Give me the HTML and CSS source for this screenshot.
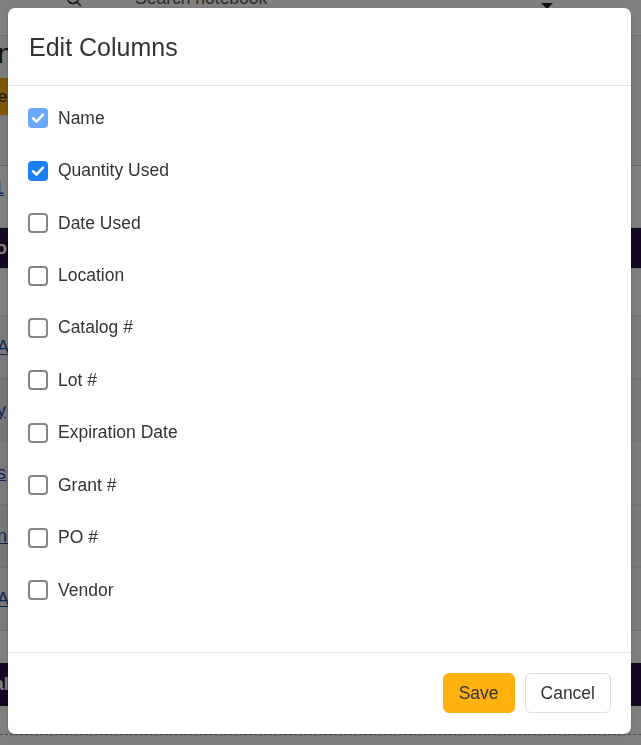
FILE: index.html
```html
<!DOCTYPE html>
<html lang="en">
<head>
<meta charset="utf-8">
<title>Edit Columns</title>
<link rel="stylesheet" href="styles.css">
</head>
<body>
<div class="page">
  <div class="topbar">
    <svg class="search-icon" width="16" height="16" viewBox="0 0 16 16"><circle cx="7" cy="7" r="5.5" fill="none" stroke="#333" stroke-width="1.6"/><line x1="11" y1="11" x2="15" y2="15" stroke="#333" stroke-width="1.6"/></svg>
    <span class="search-text">Search notebook</span>
    <span class="caret"></span>
  </div>
  <div class="page-head">
    <div class="page-title">Consumption</div>
    <div class="page-btn">Use</div>
    <div class="page-sub">Inventory</div>
  </div>
  <div class="page-tabs"><a class="page-link">1</a></div>
  <div class="table">
    <div class="thead">Info</div>
    <div class="trow blank"></div>
    <div class="trow"><a class="page-link">A</a></div>
    <div class="trow alt"><a class="page-link">y</a></div>
    <div class="trow"><a class="page-link">s</a></div>
    <div class="trow alt"><a class="page-link">nl</a></div>
    <div class="trow"><a class="page-link">A</a></div>
    <div class="tgap"></div>
    <div class="tfoot">Total</div>
  </div>
  <div class="dashed"></div>
</div>

<div class="overlay"></div>

<div class="modal">
  <div class="modal-header">
    <h2 class="modal-title">Edit Columns</h2>
  </div>
  <div class="modal-body">
    <label class="opt"><span class="box checked soft"><svg viewBox="0 0 20 20" width="20" height="20"><path d="M5 10.3 L8.5 13.6 L15 6.6" fill="none" stroke="#fff" stroke-width="2.6" stroke-linecap="round" stroke-linejoin="round"/></svg></span><span class="opt-label">Name</span></label>
    <label class="opt"><span class="box checked"><svg viewBox="0 0 20 20" width="20" height="20"><path d="M5 10.3 L8.5 13.6 L15 6.6" fill="none" stroke="#fff" stroke-width="2.6" stroke-linecap="round" stroke-linejoin="round"/></svg></span><span class="opt-label">Quantity Used</span></label>
    <label class="opt"><span class="box"></span><span class="opt-label">Date Used</span></label>
    <label class="opt"><span class="box"></span><span class="opt-label">Location</span></label>
    <label class="opt"><span class="box"></span><span class="opt-label">Catalog #</span></label>
    <label class="opt"><span class="box"></span><span class="opt-label">Lot #</span></label>
    <label class="opt"><span class="box"></span><span class="opt-label">Expiration Date</span></label>
    <label class="opt"><span class="box"></span><span class="opt-label">Grant #</span></label>
    <label class="opt"><span class="box"></span><span class="opt-label">PO #</span></label>
    <label class="opt"><span class="box"></span><span class="opt-label">Vendor</span></label>
  </div>
  <div class="modal-footer">
    <button class="btn btn-save">Save</button>
    <button class="btn btn-cancel">Cancel</button>
  </div>
</div>
</body>
</html>
```
FILE: styles.css
```css
html, body {
  margin: 0;
  padding: 0;
  height: 100%;
  overflow: hidden;
}
body {
  font-family: "Liberation Sans", Arial, sans-serif;
  color: #333;
  background: #fff;
}

/* ---------- background page ---------- */
.page {
  width: 641px;
  height: 745px;
  background: #fff;
}
.topbar {
  height: 36px;
  border-bottom: 1px solid #ddd;
  display: flex;
  align-items: flex-start;
  box-sizing: border-box;
  background: #fff;
}
.search-icon {
  margin: -9px 0 0 66px;
}
.search-text {
  margin: -12px 0 0 53px;
  font-size: 17.5px;
  color: #555;
  flex: 1;
}
.caret {
  width: 0;
  height: 0;
  border-left: 6px solid transparent;
  border-right: 6px solid transparent;
  border-top: 6px solid #222;
  margin: 3px 88px 0 0;
}
.page-head {
  height: 130px;
  background: #f7f7f7;
  border-bottom: 1px solid #ccc;
  box-sizing: border-box;
  display: flex;
  flex-direction: column;
  align-items: flex-start;
  margin-left: -170px;
}
.page-title {
  font-size: 28px;
  color: #222;
  margin-top: 2px;
  height: 40px;
  margin-left: 18px;
}
.page-btn {
  height: 37px;
  line-height: 37px;
  background: #ffb10f;
  padding: 0 12px 0 147px;
  font-size: 17px;
  color: #222;
}
.page-sub {
  font-size: 20px;
  color: #333;
  margin-top: 10px;
  margin-left: 86px;
}
.page-tabs {
  height: 62px;
  display: flex;
  align-items: flex-start;
  padding-top: 12px;
  box-sizing: border-box;
  border-bottom: 1px solid #e5e5e5;
  margin-left: -6px;
}
.page-link {
  color: #1f4fb3;
  text-decoration: underline;
  font-size: 18px;
}
.table {
  display: flex;
  flex-direction: column;
}
.thead {
  height: 40px;
  line-height: 40px;
  background: #2d1140;
  color: #fff;
  font-weight: bold;
  font-size: 18px;
  margin-left: -26px;
}
.trow {
  height: 63px;
  display: flex;
  align-items: center;
  border-top: 1px solid #e0e0e0;
  box-sizing: border-box;
  background: #f4f4f4;
  margin-left: -3px;
}
.trow.alt {
  background: #eceeed;
}
.trow.blank {
  height: 47px;
  background: #fff;
}
.tgap {
  height: 32px;
  border-top: 1px solid #e0e0e0;
}
.tfoot {
  height: 43px;
  line-height: 43px;
  background: #2d1140;
  color: #fff;
  font-weight: bold;
  font-size: 18px;
  margin-left: -33px;
}
.dashed {
  margin-top: 28px;
  border-top: 1px dashed #999;
}

/* ---------- overlay ---------- */
.overlay {
  position: fixed;
  inset: 0;
  background: rgba(0, 0, 0, 0.5);
}

/* ---------- modal ---------- */
.modal {
  position: fixed;
  top: 8px;
  left: 8px;
  width: 623px;
  height: 726px;
  background: #fff;
  border-radius: 7px;
  display: flex;
  flex-direction: column;
  box-shadow: 0 1px 3px rgba(0, 0, 0, 0.25);
}
.modal-header {
  height: 78px;
  box-sizing: border-box;
  border-bottom: 1px solid #dee2e6;
  display: flex;
  align-items: center;
  padding: 0 20px 0 21px;
}
.modal-title {
  margin: 0;
  font-size: 25px;
  font-weight: normal;
  color: #333;
  line-height: 1.2;
}
.modal-body {
  flex: 1;
  padding: 6px 20px 0 20px;
  display: flex;
  flex-direction: column;
}
.opt {
  height: 52.44px;
  display: flex;
  align-items: center;
  gap: 10px;
  flex-shrink: 0;
}
.box {
  width: 20px;
  height: 20px;
  box-sizing: border-box;
  border: 2px solid #858585;
  border-radius: 4px;
  background: #fff;
  display: flex;
  align-items: center;
  justify-content: center;
  flex-shrink: 0;
}
.box.checked {
  border: none;
  background: #1b7ff6;
}
.box.checked.soft {
  background: #6aa8fb;
}
.box svg {
  display: block;
}
.opt-label {
  font-size: 17.5px;
  color: #333;
}
.modal-footer {
  height: 82px;
  box-sizing: border-box;
  border-top: 1px solid #dee2e6;
  display: flex;
  align-items: flex-start;
  justify-content: flex-end;
  gap: 10px;
  padding: 20px 20px 0 20px;
}
.btn {
  height: 40px;
  box-sizing: border-box;
  border-radius: 6px;
  font-family: "Liberation Sans", Arial, sans-serif;
  font-size: 17.5px;
  color: #333;
  padding: 0 15px;
  cursor: pointer;
}
.btn-save {
  background: #ffb10f;
  border: 1px solid #ffb10f;
}
.btn-cancel {
  background: #fff;
  border: 1px solid #dedede;
}
```
